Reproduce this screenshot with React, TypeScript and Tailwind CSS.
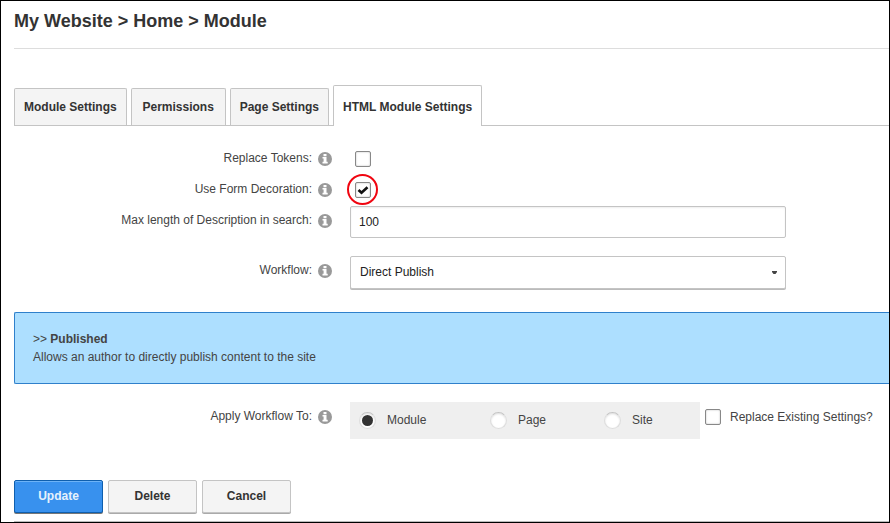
import { useState, type ReactNode } from "react";

const tabs = ["Module Settings", "Permissions", "Page Settings", "HTML Module Settings"];

function InfoButton({ about }: { about: string }) {
  return (
    <button type="button" aria-label={`Help: ${about}`} className="grid h-[30px] w-[14px] shrink-0 place-items-center">
      <svg viewBox="0 0 14 14" className="h-[14px] w-[14px]" aria-hidden="true">
        <circle cx="7" cy="7" r="7" fill="#999" />
        <path d="M5.5 2h3v2.2h-3zM4.5 5h4v4.8h1.2v1.7H4.5V9.8h1.1V6.6H4.5z" fill="#fff" />
      </svg>
    </button>
  );
}

function Row({
  label,
  htmlFor,
  className = "",
  children,
}: {
  label: string;
  htmlFor: string;
  className?: string;
  children: ReactNode;
}) {
  return (
    <div className={`flex items-start ${className}`}>
      <label htmlFor={htmlFor} className="w-[298px] shrink-0 text-right leading-7">
        {label}
      </label>
      <div className="ml-1.5 mr-[18px] flex">
        <InfoButton about={label} />
      </div>
      {children}
    </div>
  );
}

function Checkbox({ id, defaultChecked = false }: { id: string; defaultChecked?: boolean }) {
  const [checked, setChecked] = useState(defaultChecked);
  return (
    <span className="grid h-4 w-4 shrink-0 place-items-center">
      <input
        id={id}
        type="checkbox"
        checked={checked}
        onChange={(e) => setChecked(e.target.checked)}
        className="col-start-1 row-start-1 h-4 w-4 appearance-none rounded-[2px] border border-[#888] bg-white shadow-[inset_0_0_2px_#bbb]"
      />
      {checked && (
        <svg viewBox="0 0 12 10" className="pointer-events-none col-start-1 row-start-1 h-[10px] w-3" aria-hidden="true">
          <path d="M1.5 5l3 2.8 6-5.6" fill="none" stroke="#111" strokeWidth="2.6" />
        </svg>
      )}
    </span>
  );
}

function Radio({ id, label, checked, onSelect, className }: { id: string; label: string; checked: boolean; onSelect: () => void; className: string }) {
  return (
    <div className={`flex items-center ${className}`}>
      <span className="grid h-[17px] w-[17px] shrink-0 place-items-center">
        <input
          id={id}
          type="radio"
          name="workflow-scope"
          checked={checked}
          onChange={onSelect}
          className="col-start-1 row-start-1 h-[17px] w-[17px] appearance-none rounded-full border border-[#ddd] border-t-[#c4c4c4] bg-white shadow-[inset_0_1px_2px_#ddd]"
        />
        {checked && <span className="pointer-events-none col-start-1 row-start-1 h-[11px] w-[11px] rounded-full bg-[#333]" />}
      </span>
      <label htmlFor={id} className="ml-[11px] pb-px leading-4">
        {label}
      </label>
    </div>
  );
}

const plainButton = "border-[#c4c4c4] bg-[#f4f4f4] text-[#333] shadow-[0_1px_0_#aaa]";
const primaryButton = "border-[#0f5fae] bg-[#3891ee] text-[#e6f1fc] shadow-[0_1px_0_#777,inset_0_1px_0_#6db3f7]";

export default function App() {
  const [active, setActive] = useState(3);
  const [scope, setScope] = useState("module");
  return (
    <main className="border border-black bg-white pl-[13px] font-['Liberation_Sans',Arial,sans-serif] text-xs text-[#444]">
      <h1 className="border-b border-[#ddd] pt-2 pb-[15px] text-lg leading-6 font-bold text-[#333]">My Website &gt; Home &gt; Module</h1>

      <div role="tablist" className="mt-9 flex items-end gap-1 border-b border-[#c4c4c4]">
        {tabs.map((tab, i) => (
          <button
            key={tab}
            type="button"
            role="tab"
            aria-selected={i === active}
            onClick={() => setActive(i)}
            className={`min-w-[95px] rounded-t-[2px] border border-b-0 border-[#c4c4c4] px-[9px] font-bold text-[#333] ${
              i === active ? "-mb-px h-[41px] bg-white pt-px" : "h-[37px] bg-[#f4f4f4]"
            }`}
          >
            {tab}
          </button>
        ))}
      </div>

      <form onSubmit={(e) => e.preventDefault()}>
        <div className="pt-[18px]">
          <Row label="Replace Tokens:" htmlFor="tokens" className="h-[31px]">
            <div className="flex h-[30px] items-center pl-[5px]">
              <Checkbox id="tokens" />
            </div>
          </Row>
          <Row label="Use Form Decoration:" htmlFor="decoration" className="h-[31px]">
            <div className="relative flex h-[30px] items-center pl-[5px]">
              <Checkbox id="decoration" defaultChecked />
              <span className="pointer-events-none absolute -top-px -left-[3px] h-[31px] w-[31px] rounded-full border-2 border-[#f00510]" />
            </div>
          </Row>
          <Row label="Max length of Description in search:" htmlFor="max-length">
            <input
              id="max-length"
              type="text"
              defaultValue="100"
              className="h-8 max-w-[436px] min-w-0 flex-1 rounded-[2px] border border-[#c4c4c4] bg-white px-2 text-[#222] shadow-[inset_0_1px_2px_#eee]"
            />
          </Row>
          <Row label="Workflow:" htmlFor="workflow" className="mt-[18px]">
            <div className="grid max-w-[436px] min-w-0 flex-1 items-center">
              <select
                id="workflow"
                className="col-start-1 row-start-1 h-[33px] appearance-none rounded-[2px] border border-[#c4c4c4] bg-white px-[9px] pb-0.5 text-[#222] shadow-[0_1px_0_#bbb]"
              >
                <option>Direct Publish</option>
              </select>
              <svg viewBox="0 0 5 3" className="pointer-events-none col-start-1 row-start-1 mr-[9px] h-[3px] w-[5px] justify-self-end" aria-hidden="true">
                <path d="M0 0h5v1L3.5 3h-2L0 1z" fill="#444" />
              </svg>
            </div>
          </Row>
        </div>

        <section className="mt-[23px] rounded-l-[2px] border border-r-0 border-[#2f80cb] bg-[#addfff] px-[18px] py-[17px] leading-[18px]">
          <p>
            &gt;&gt; <strong>Published</strong>
          </p>
          <p>Allows an author to directly publish content to the site</p>
        </section>

        <Row label="Apply Workflow To:" htmlFor="scope-module" className="mt-[18px]">
          <div role="radiogroup" aria-label="Apply Workflow To" className="flex h-[37px] w-[350px] shrink-0 items-center bg-[#efefef] pl-[9px]">
            <Radio id="scope-module" label="Module" checked={scope === "module"} onSelect={() => setScope("module")} className="w-[131px]" />
            <Radio id="scope-page" label="Page" checked={scope === "page"} onSelect={() => setScope("page")} className="w-[114px]" />
            <Radio id="scope-site" label="Site" checked={scope === "site"} onSelect={() => setScope("site")} className="" />
          </div>
          <div className="ml-[5px] flex h-[30px] items-center">
            <Checkbox id="replace" />
            <label htmlFor="replace" className="ml-[9px] leading-4 whitespace-nowrap">
              Replace Existing Settings?
            </label>
          </div>
        </Row>

        <div className="mt-[41px] flex gap-[5px] pb-2">
          {["Update", "Delete", "Cancel"].map((name) => (
            <button
              key={name}
              type={name === "Update" ? "submit" : "button"}
              className={`h-[33px] w-[89px] rounded-[2px] border pb-0.5 font-bold ${name === "Update" ? primaryButton : plainButton}`}
            >
              {name}
            </button>
          ))}
        </div>
      </form>
      <hr className="border-[#bbb]" />
    </main>
  );
}
